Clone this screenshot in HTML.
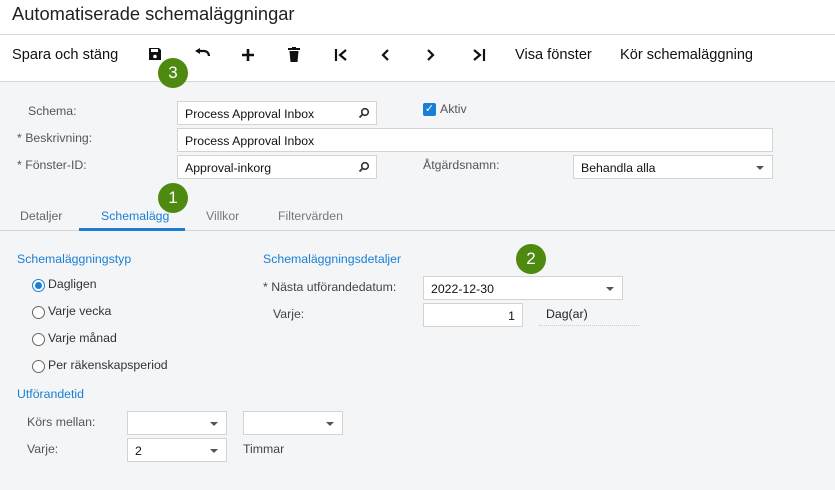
<!DOCTYPE html>
<html><head><meta charset="utf-8"><style>
*{box-sizing:border-box;margin:0;padding:0}
body{width:835px;height:490px;overflow:hidden;background:#f4f5f7;font-family:"Liberation Sans",Arial,sans-serif;position:relative;color:#222}
.a{position:absolute;white-space:nowrap}
.hdr{position:absolute;left:0;top:0;width:835px;height:82px;background:#fff;border-bottom:1px solid #d6d6d6}
.lbl{font-size:12.3px;color:#555}
.inp{position:absolute;background:#fff;border:1px solid #d3d3d3;height:24px;font-size:12.3px;padding:5px 7px;color:#111}
.blue{color:#1a7fd4;font-size:12.3px}
.dd{position:absolute;right:8px;top:10px;width:0;height:0;border-left:4px solid transparent;border-right:4px solid transparent;border-top:4px solid #555}
.badge{position:absolute;width:30px;height:30px;border-radius:50%;background:#4f8a10;color:#fff;font-size:17px;text-align:center;line-height:30px}
.radio{position:absolute;width:13px;height:13px;border:1px solid #666;border-radius:50%;background:#fff}
.tb{font-size:14.6px;color:#111}
.srch{position:absolute;right:6px;top:5px}
</style></head><body>
<div class="hdr"></div>
<div class="a" style="left:0;top:34px;width:835px;height:1px;background:#d6d6d6"></div>
<div class="a" style="left:12px;top:3px;font-size:18.3px;color:#222">Automatiserade schemaläggningar</div>
<div class="a tb" style="left:12px;top:47px">Spara och stäng</div>
<svg class="a" style="left:148px;top:47px" width="14" height="14" viewBox="0 0 14 14"><path d="M1 1h10l2 2v10H1z" fill="#111"/><rect x="3" y="2" width="7" height="3" fill="#fff"/><circle cx="7" cy="9.5" r="1.8" fill="#fff"/></svg>
<svg class="a" style="left:194px;top:48px" width="16" height="12" viewBox="0 0 16 12"><path d="M4 3h6a5 5 0 0 1 5 5" fill="none" stroke="#111" stroke-width="2.2"/><path d="M1 3l5-3v6z" fill="#111"/></svg>
<svg class="a" style="left:241px;top:48px" width="14" height="14" viewBox="0 0 14 14"><path d="M7 1v12M1 7h12" stroke="#111" stroke-width="2.6"/></svg>
<svg class="a" style="left:288px;top:47px" width="12" height="15" viewBox="0 0 12 15"><rect x="0" y="1" width="12" height="2" fill="#111"/><rect x="4" y="0" width="4" height="2" fill="#111"/><path d="M1.5 4h9l-1 11h-7z" fill="#111"/></svg>
<svg class="a" style="left:334px;top:48px" width="14" height="14" viewBox="0 0 14 14"><path d="M2 1v12" stroke="#111" stroke-width="2.2"/><path d="M12 2L6 7l6 5" fill="none" stroke="#111" stroke-width="2.2"/></svg>
<svg class="a" style="left:380px;top:48px" width="10" height="14" viewBox="0 0 10 14"><path d="M8 2L3 7l5 5" fill="none" stroke="#111" stroke-width="2.2"/></svg>
<svg class="a" style="left:426px;top:48px" width="10" height="14" viewBox="0 0 10 14"><path d="M2 2l5 5-5 5" fill="none" stroke="#111" stroke-width="2.2"/></svg>
<svg class="a" style="left:472px;top:48px" width="14" height="14" viewBox="0 0 14 14"><path d="M2 2l6 5-6 5" fill="none" stroke="#111" stroke-width="2.2"/><path d="M12 1v12" stroke="#111" stroke-width="2.2"/></svg>
<div class="a tb" style="left:515px;top:47px">Visa fönster</div>
<div class="a tb" style="left:620px;top:47px">Kör schemaläggning</div>
<div class="badge" style="left:158px;top:58px">3</div>

<div class="a lbl" style="left:28px;top:104px">Schema:</div>
<div class="a lbl" style="left:17px;top:131px">* Beskrivning:</div>
<div class="a lbl" style="left:17px;top:158px">* Fönster-ID:</div>
<div class="inp" style="left:177px;top:101px;width:200px">Process Approval Inbox<svg class="srch" width="12" height="12" viewBox="0 0 12 12"><circle cx="7" cy="5" r="3.3" fill="none" stroke="#333" stroke-width="1.6"/><path d="M4.6 7.4L1.5 10.5" stroke="#333" stroke-width="1.8"/></svg></div>
<div class="inp" style="left:177px;top:128px;width:596px">Process Approval Inbox</div>
<div class="inp" style="left:177px;top:155px;width:200px">Approval-inkorg<svg class="srch" width="12" height="12" viewBox="0 0 12 12"><circle cx="7" cy="5" r="3.3" fill="none" stroke="#333" stroke-width="1.6"/><path d="M4.6 7.4L1.5 10.5" stroke="#333" stroke-width="1.8"/></svg></div>
<div class="a" style="left:423px;top:103px;width:13px;height:13px;background:#1a7fd4;border-radius:2px;color:#fff;font-size:11px;line-height:13px;text-align:center">✓</div>
<div class="a lbl" style="left:440px;top:102px">Aktiv</div>
<div class="a lbl" style="left:423px;top:158px">Åtgärdsnamn:</div>
<div class="inp" style="left:573px;top:155px;width:200px">Behandla alla<span class="dd"></span></div>

<div class="a lbl" style="left:20px;top:209px;color:#666">Detaljer</div>
<div class="a" style="left:101px;top:209px;font-size:12.3px;color:#1a7fd4">Schemalägg</div>
<div class="a lbl" style="left:206px;top:209px;color:#777">Villkor</div>
<div class="a lbl" style="left:278px;top:209px;color:#777">Filtervärden</div>
<div class="a" style="left:0;top:230px;width:835px;height:1px;background:#d6d6d6"></div>
<div class="a" style="left:79px;top:228px;width:106px;height:3px;background:#1a7fd4"></div>
<div class="badge" style="left:158px;top:183px">1</div>

<div class="a blue" style="left:17px;top:252px">Schemaläggningstyp</div>
<div class="radio" style="left:32px;top:279px;border:1.5px solid #1a7fd4"><div style="margin:2px;width:7px;height:7px;border-radius:50%;background:#1a7fd4"></div></div>
<div class="a lbl" style="left:48px;top:277px;color:#333">Dagligen</div>
<div class="radio" style="left:32px;top:306px"></div><div class="a lbl" style="left:48px;top:304px;color:#333">Varje vecka</div>
<div class="radio" style="left:32px;top:333px"></div><div class="a lbl" style="left:48px;top:331px;color:#333">Varje månad</div>
<div class="radio" style="left:32px;top:360px"></div><div class="a lbl" style="left:48px;top:358px;color:#333">Per räkenskapsperiod</div>
<div class="a blue" style="left:17px;top:387px">Utförandetid</div>
<div class="a lbl" style="left:27px;top:415px">Körs mellan:</div>
<div class="a lbl" style="left:27px;top:442px">Varje:</div>
<div class="inp" style="left:127px;top:411px;width:100px"><span class="dd"></span></div>
<div class="inp" style="left:243px;top:411px;width:100px"><span class="dd"></span></div>
<div class="inp" style="left:127px;top:438px;width:100px">2<span class="dd"></span></div>
<div class="a lbl" style="left:243px;top:442px;color:#444">Timmar</div>

<div class="a blue" style="left:263px;top:252px">Schemaläggningsdetaljer</div>
<div class="a lbl" style="left:263px;top:280px;color:#444">* Nästa utförandedatum:</div>
<div class="a lbl" style="left:273px;top:307px;color:#444">Varje:</div>
<div class="inp" style="left:423px;top:276px;width:200px">2022-12-30<span class="dd"></span></div>
<div class="inp" style="left:423px;top:303px;width:100px;text-align:right">1</div>
<div class="a" style="left:546px;top:307px;font-size:12.3px;color:#222">Dag(ar)</div>
<div class="a" style="left:539px;top:325px;width:100px;border-top:1px dotted #ccc"></div>
<div class="badge" style="left:516px;top:244px">2</div>
</body></html>
